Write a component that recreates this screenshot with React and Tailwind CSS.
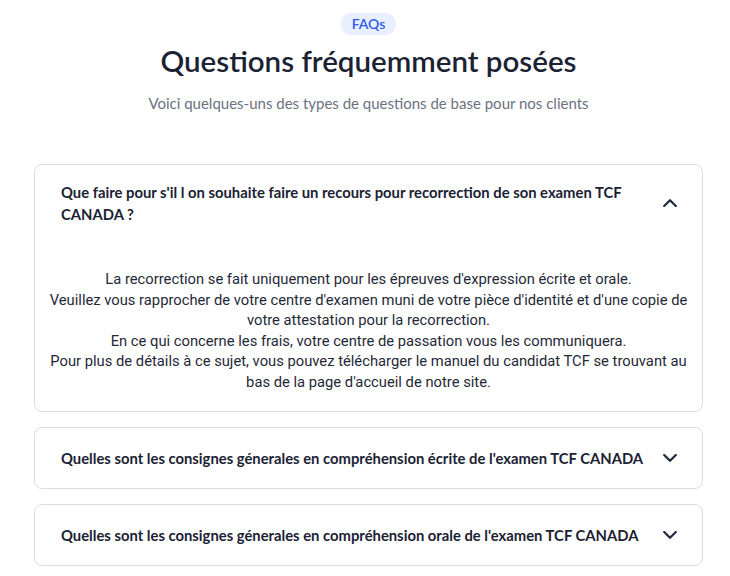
import React, { useState } from "react";

const faqs = [
  {
    q: "Que faire pour s'il l on souhaite faire un recours pour recorrection de son examen TCF CANADA ?",
    a: [
      "La recorrection se fait uniquement pour les épreuves d'expression écrite et orale.",
      "Veuillez vous rapprocher de votre centre d'examen muni de votre pièce d'identité et d'une copie de votre attestation pour la recorrection.",
      "En ce qui concerne les frais, votre centre de passation vous les communiquera.",
      "Pour plus de détails à ce sujet, vous pouvez télécharger le manuel du candidat TCF se trouvant au bas de la page d'accueil de notre site.",
    ],
  },
  {
    q: "Quelles sont les consignes génerales en compréhension écrite de l'examen TCF CANADA",
    a: [],
  },
  {
    q: "Quelles sont les consignes génerales en compréhension orale de l'examen TCF CANADA",
    a: [],
  },
];

const Chevron = ({ up }) => (
  <svg width="14" height="8" viewBox="0 0 14 8" fill="none" stroke="#1e293b" strokeWidth="2.2" strokeLinecap="round" strokeLinejoin="round">
    {up ? <path d="M1.2 7l5.8-5.8 5.8 5.8" /> : <path d="M1.2 1l5.8 5.8 5.8-5.8" />}
  </svg>
);

export default function App() {
  const [open, setOpen] = useState(0);

  return (
    <div className="min-h-screen bg-white pl-[34px] pr-[27px] pt-[13px] font-['Lato',sans-serif]">
      {/* Heading */}
      <div className="flex flex-col items-center text-center">
        <span className="rounded-full bg-[#e8efff] px-[11px] py-[3px] text-[14px] font-semibold leading-[16px] text-[#2f5bea]">
          FAQs
        </span>
        <h1 className="mt-[8px] text-[29.5px] font-semibold leading-[36px] text-[#1a2233]">
          Questions fréquemment posées
        </h1>
        <p className="mt-[14px] text-[15px] leading-[20px] text-[#6b7280]">
          Voici quelques-uns des types de questions de base pour nos clients
        </p>
      </div>

      {/* Accordion */}
      <div className="mt-[51px] flex flex-col gap-[15px]">
        {faqs.map((item, i) => (
          <div key={i} className="rounded-lg border border-[#dcdde3] bg-white">
            <button
              onClick={() => setOpen(open === i ? -1 : i)}
              className={`flex w-full items-center justify-between gap-[12px] pl-[26px] pr-[25px] text-left ${open === i ? "pt-[16px]" : "py-[19px]"}`}
            >
              <span className="text-[14.8px] font-bold leading-[22px] text-[#1a2233]">{item.q}</span>
              <span className="flex shrink-0 items-center">
                <Chevron up={open === i} />
              </span>
            </button>
            {open === i && (
              <div className="px-[14px] pb-[18px] pt-[44px] text-center font-['Roboto',sans-serif] text-[14.75px] leading-[20.6px] text-[#1f2937]">
                {item.a.map((line, j) => (
                  <p key={j}>{line}</p>
                ))}
              </div>
            )}
          </div>
        ))}
      </div>
    </div>
  );
}
